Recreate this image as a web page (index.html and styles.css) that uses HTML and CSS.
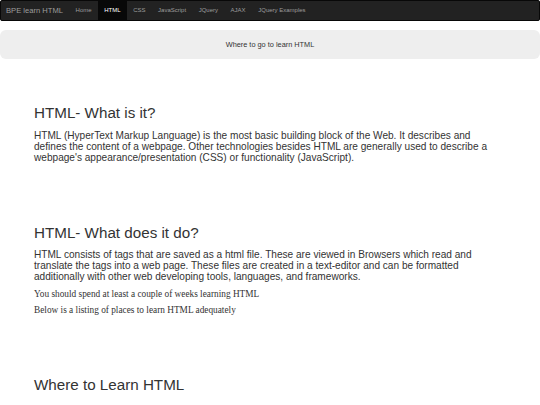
FILE: index.html
```html
<!DOCTYPE html>
<html lang="en">
<head>
  <meta charset="UTF-8">
  <meta name="viewport" content="width=device-width, initial-scale=1.0">
  <title>BPE learn HTML</title>
  <link rel="stylesheet" href="styles.css">
</head>
<body>
  <nav class="navbar">
    <a class="brand" href="#">BPE learn HTML</a>
    <ul class="nav">
      <li><a href="#">Home</a></li>
      <li class="active"><a href="#">HTML</a></li>
      <li><a href="#">CSS</a></li>
      <li><a href="#">JavaScript</a></li>
      <li><a href="#">JQuery</a></li>
      <li><a href="#">AJAX</a></li>
      <li><a href="#">JQuery Examples</a></li>
    </ul>
  </nav>

  <div class="well">Where to go to learn HTML</div>

  <div class="section">
    <h1>HTML- What is it?</h1>
    <p class="lead">HTML (HyperText Markup Language) is the most basic building block of the Web. It describes and defines the content of a webpage. Other technologies besides HTML are generally used to describe a webpage's appearance/presentation (CSS) or functionality (JavaScript).</p>
  </div>

  <div class="section">
    <h1>HTML- What does it do?</h1>
    <p class="lead">HTML consists of tags that are saved as a html file. These are viewed in Browsers which read and translate the tags into a web page. These files are created in a text-editor and can be formatted additionally with other web developing tools, languages, and frameworks.</p>
    <p class="note">You should spend at least a couple of weeks learning HTML</p>
    <p class="note">Below is a listing of places to learn HTML adequately</p>
  </div>

  <div class="section">
    <h1>Where to Learn HTML</h1>
  </div>
</body>
</html>
```

FILE: styles.css
```css
body { margin: 0; font-family: "Liberation Sans", Arial, sans-serif; color: #333; background: #fff; }
a { text-decoration: none; }

.navbar { display: flex; align-items: stretch; height: 21px; box-sizing: border-box; background: #222; border: 1px solid #080808; border-radius: 2px; margin-bottom: 9px; }
.brand { padding: 0 6.3px 0 5px; font-size: 7.6px; line-height: 19px; color: #9d9d9d; }
.nav { display: flex; margin: 0; padding: 0; list-style: none; }
.nav li a { display: block; padding: 0 6.3px; font-size: 6px; line-height: 19px; color: #9d9d9d; }
.nav li.active a { background: #080808; color: #fff; }

.well { height: 29px; display: flex; align-items: center; justify-content: center; background: #eee; border-radius: 6px; font-size: 7.35px; color: #333; }

.section { max-width: 464px; padding: 46.4px 34px 15px; }
h1 { margin: 0 0 8px; font-size: 15.2px; font-weight: normal; line-height: 1.1; }
.lead { margin: 0; font-size: 10.1px; line-height: 11px; }
.note { margin: 7px 0 0; font-family: "Liberation Serif", "Times New Roman", serif; font-size: 9.3px; line-height: 10.5px; }
.note + .note { margin-top: 5.5px; }
```
